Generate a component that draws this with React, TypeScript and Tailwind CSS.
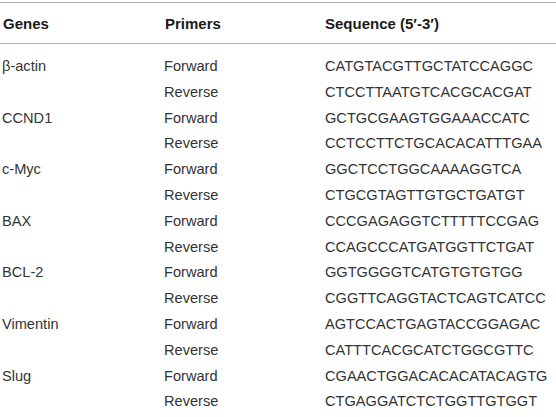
import React from "react";

const rows: [string, string, string][] = [
  ["β-actin", "Forward", "CATGTACGTTGCTATCCAGGC"],
  ["", "Reverse", "CTCCTTAATGTCACGCACGAT"],
  ["CCND1", "Forward", "GCTGCGAAGTGGAAACCATC"],
  ["", "Reverse", "CCTCCTTCTGCACACATTTGAA"],
  ["c-Myc", "Forward", "GGCTCCTGGCAAAAGGTCA"],
  ["", "Reverse", "CTGCGTAGTTGTGCTGATGT"],
  ["BAX", "Forward", "CCCGAGAGGTCTTTTTCCGAG"],
  ["", "Reverse", "CCAGCCCATGATGGTTCTGAT"],
  ["BCL-2", "Forward", "GGTGGGGTCATGTGTGTGG"],
  ["", "Reverse", "CGGTTCAGGTACTCAGTCATCC"],
  ["Vimentin", "Forward", "AGTCCACTGAGTACCGGAGAC"],
  ["", "Reverse", "CATTTCACGCATCTGGCGTTC"],
  ["Slug", "Forward", "CGAACTGGACACACATACAGTG"],
  ["", "Reverse", "CTGAGGATCTCTGGTTGTGGT"],
];

export default function App() {
  return (
    <div
      className="w-[556px] h-[417px] bg-white overflow-hidden pt-[2px]"
      style={{ fontFamily: '"Liberation Sans", Arial, sans-serif' }}
    >
      <div className="border-t border-b border-[#b4b4b4] h-[42px] grid grid-cols-[161px_161px_1fr] items-center pl-[3px] pt-[2px] text-[15px] font-bold text-[#1a1a1a]">
        <div>Genes</div>
        <div className="pl-[1px]">Primers</div>
        <div>Sequence (5′-3′)</div>
      </div>
      <div className="pt-[10px] text-[14.6px] text-[#333333]">
        {rows.map((r, i) => (
          <div
            key={i}
            className="grid grid-cols-[161px_161px_1fr] items-center h-[25.8px] pl-[2px]"
          >
            <div>{r[0]}</div>
            <div className="pl-[1px]">{r[1]}</div>
            <div className="pl-[1px]">{r[2]}</div>
          </div>
        ))}
      </div>
    </div>
  );
}
